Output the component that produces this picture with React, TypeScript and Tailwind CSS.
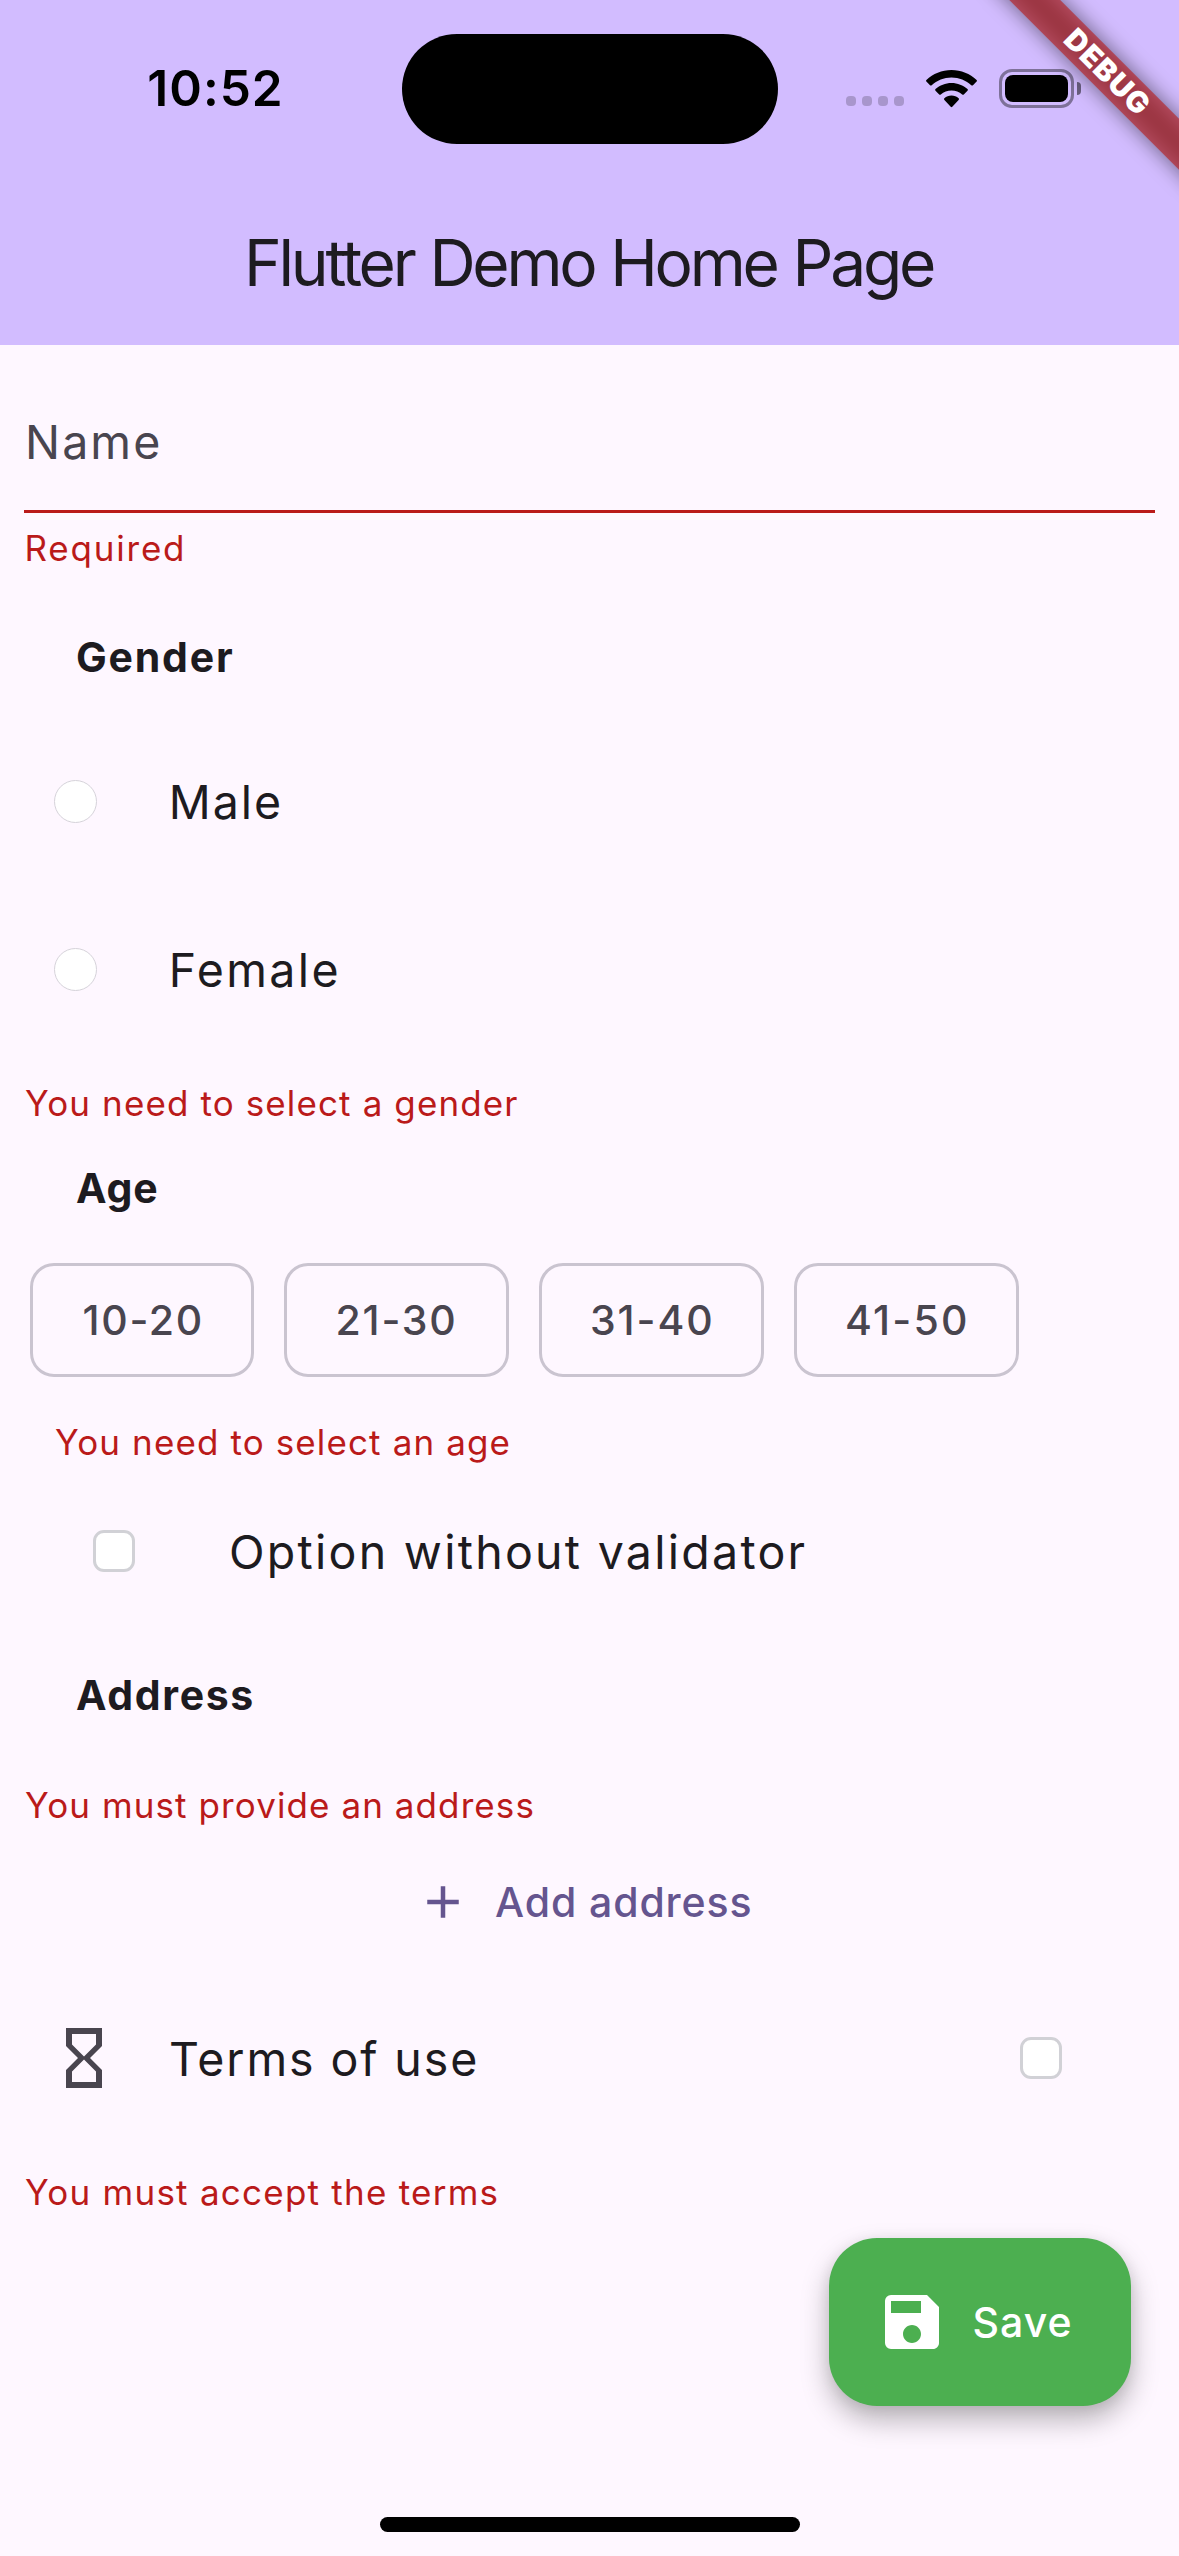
import type { ReactNode } from "react";
import { MdAdd, MdHourglassEmpty, MdSave } from "react-icons/md";

function ErrorText({ children, className }: { children: ReactNode; className: string }) {
  return (
    <p className={`flex items-center text-[35px] leading-none whitespace-nowrap text-[#ba1a1a] ${className}`}>
      {children}
    </p>
  );
}

function SectionTitle({ children, className }: { children: ReactNode; className: string }) {
  return (
    <h2 className={`flex items-center pl-[76px] text-[41px] leading-none font-bold whitespace-nowrap ${className}`}>
      {children}
    </h2>
  );
}

function RadioRow({ label, tracking }: { label: string; tracking: string }) {
  return (
    <label className="flex h-[168px] items-center pl-[53.5px]">
      <span className="size-[43px] shrink-0 rounded-full border border-[#d6d3da] bg-white" />
      <span className={`ml-[72.3px] pt-0.5 text-[46.5px] leading-none ${tracking}`}>{label}</span>
    </label>
  );
}

function CheckBox({ className }: { className: string }) {
  return <span className={`size-[42px] shrink-0 rounded-[11px] border-[3px] border-[#d1d1d6] bg-white ${className}`} />;
}

function Chip({ children, className }: { children: ReactNode; className: string }) {
  return (
    <button
      className={`flex h-[114px] items-center rounded-[24px] border-[3px] border-[#cac4d0] pt-px text-[41px] leading-none font-[470] whitespace-nowrap text-[#49454f] ${className}`}
    >
      {children}
    </button>
  );
}

function StatusBar() {
  return (
    <div className="flex h-[177px] items-center text-black">
      <div className="w-[402px] shrink-0 pl-[147.3px] text-[49.5px] leading-none font-semibold tracking-[1px]">10:52</div>
      <div className="h-[110px] w-[375.5px] shrink-0 rounded-full bg-black" />
      <div className="mt-6 ml-[68.5px] flex gap-[6px]">
        {[0, 1, 2, 3].map((i) => (
          <span key={i} className="size-[10px] rounded-[4px] bg-black/20" />
        ))}
      </div>
      <svg className="ml-[22px] h-[38px] w-[51px] shrink-0" viewBox="0 0 51 38" fill="black">
        <path d="M25.5 0C35.2 0 44 3.8 50.6 9.9c.5.5.5 1.2 0 1.7l-3.6 3.6c-.5.5-1.2.5-1.7 0C40 10.3 33.1 7.4 25.5 7.4S11 10.3 5.7 15.2c-.5.5-1.2.5-1.7 0L.4 11.6c-.5-.5-.5-1.2 0-1.7C7 3.8 15.8 0 25.5 0z" />
        <path d="M25.5 12.9c6.1 0 11.7 2.3 16 6.1.5.5.5 1.2 0 1.7l-3.7 3.7c-.5.5-1.1.5-1.6 0-2.9-2.5-6.6-4-10.7-4s-7.8 1.5-10.7 4c-.5.5-1.1.5-1.6 0l-3.7-3.7c-.5-.5-.5-1.2 0-1.7 4.3-3.8 9.9-6.1 16-6.1z" />
        <path d="M25.5 25.6c2.7 0 5.2 1 7.1 2.6.5.4.5 1.2 0 1.7l-6.3 6.9c-.5.5-1.1.5-1.6 0l-6.3-6.9c-.5-.5-.5-1.3 0-1.7 1.9-1.6 4.4-2.6 7.1-2.6z" />
      </svg>
      <div className="ml-[22px] flex h-[39px] w-[75px] shrink-0 rounded-[13px] border-[3px] border-black/40 p-[3px]">
        <div className="flex-1 rounded-[8px] bg-black" />
      </div>
      <div className="ml-[3px] h-[13px] w-[4px] rounded-r-full bg-black/50" />
    </div>
  );
}

function DebugBanner() {
  return (
    <div className="absolute top-0 right-0 size-[300px] overflow-hidden">
      <div className="absolute top-0 left-full h-0 w-0 rotate-45">
        <div className="absolute top-[84px] left-[-150px] h-[36px] w-[300px] bg-black/50 blur-[10.5px]" />
        <div className="absolute top-[84px] left-[-150px] flex h-[36px] w-[300px] items-center justify-center bg-[#b71c1c]/63 pl-[1px] text-[29.6px] leading-none font-black tracking-[1px] text-white">
          DEBUG
        </div>
      </div>
    </div>
  );
}

export default function App() {
  return (
    <div className="relative h-[2556px] w-[1179px] overflow-hidden bg-[#fef7ff] font-['Inter',sans-serif] text-[#1d1b20]">
      <header className="h-[345px] bg-[#d2bcff]">
        <StatusBar />
        <h1 className="flex h-[168px] items-center pt-[3px] pl-[244px] text-[64px] leading-none tracking-[-3.25px] whitespace-nowrap [word-spacing:1.2px]">
          Flutter Demo Home Page
        </h1>
      </header>

      <main className="flex flex-col">
        <div className="mx-[24px] flex h-[168px] items-center border-b-[3px] border-[#ba1a1a] pt-[29px] pl-[1px] text-[46.5px] leading-none tracking-[2.1px] text-[#49454f]">
          Name
        </div>
        <ErrorText className="h-[70px] pl-[24.5px] tracking-[1.8px]">Required</ErrorText>

        <SectionTitle className="h-[134px] pt-[15px] tracking-[1.8px]">Gender</SectionTitle>
        <RadioRow label="Male" tracking="tracking-[1.94px]" />
        <RadioRow label="Female" tracking="tracking-[2.37px]" />
        <ErrorText className="h-[101px] pl-[25px] tracking-[1.12px]">You need to select a gender</ErrorText>

        <SectionTitle className="h-[68px] pt-[1px] tracking-[0.8px]">Age</SectionTitle>
        <div className="mt-[41px] flex gap-[30px] pl-[30px]">
          <Chip className="w-[224px] pl-[49.5px] tracking-[1.7px]">10-20</Chip>
          <Chip className="w-[224.5px] pl-[48.5px] tracking-[1.8px]">21-30</Chip>
          <Chip className="w-[225px] pl-[48.5px] tracking-[1.9px]">31-40</Chip>
          <Chip className="w-[225px] pl-[48.5px] tracking-[2.2px]">41-50</Chip>
        </div>
        <ErrorText className="h-[130px] pl-[55px] tracking-[1.12px]">You need to select an age</ErrorText>

        <label className="flex h-[88px] items-center pl-[93px]">
          <CheckBox className="" />
          <span className="ml-[94px] pt-0.5 text-[46.5px] leading-none tracking-[2.27px] whitespace-nowrap">
            Option without validator
          </span>
        </label>

        <SectionTitle className="h-[160px] pt-[41px] tracking-[1.65px]">Address</SectionTitle>
        <ErrorText className="h-[100px] pl-[25px] tracking-[1.09px]">You must provide an address</ErrorText>
        <button className="flex h-[94px] items-center pl-[415.7px] text-[#65558f]">
          <MdAdd className="size-[54px] shrink-0" />
          <span className="ml-[25.3px] pt-px text-[41px] leading-none font-[470] tracking-[0.9px] whitespace-nowrap">
            Add address
          </span>
        </button>

        <label className="mt-[25px] flex h-[168px] items-center pl-[48px]">
          <MdHourglassEmpty className="size-[72px] shrink-0 text-[#49454f]" />
          <span className="ml-[49px] pt-0.5 text-[46.5px] leading-none tracking-[1.9px] whitespace-nowrap">
            Terms of use
          </span>
          <CheckBox className="mr-[117px] ml-auto" />
        </label>
        <ErrorText className="h-[101px] pl-[25px] tracking-[1.24px]">You must accept the terms</ErrorText>
      </main>

      <button className="absolute top-[2238px] right-[48px] flex h-[168px] w-[302.5px] items-center rounded-[48px] bg-[#4caf50] pl-[47.5px] text-white shadow-[0_14px_28px_rgba(0,0,0,0.28),0_2px_14px_rgba(0,0,0,0.07)]">
        <MdSave className="size-[72px] shrink-0" />
        <span className="ml-[24.5px] pt-px text-[41px] leading-none font-[470] tracking-[1px]">Save</span>
      </button>

      <div className="absolute bottom-[24px] left-1/2 h-[15px] w-[420px] -translate-x-1/2 rounded-full bg-black" />
      <DebugBanner />
    </div>
  );
}
